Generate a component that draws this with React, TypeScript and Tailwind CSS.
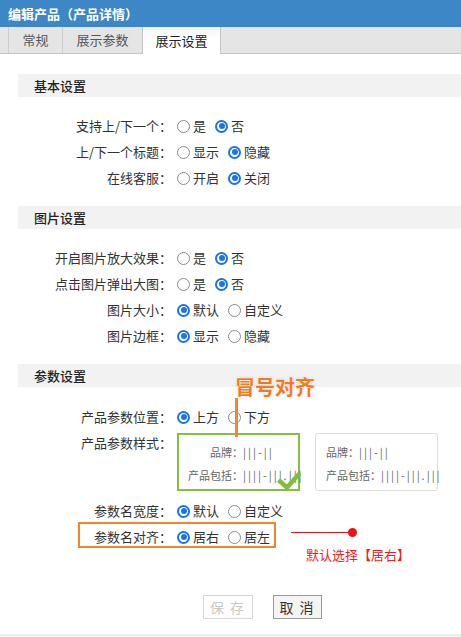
import React from "react";

const FONT = { fontFamily: '"Noto Sans CJK SC", "Noto Sans", sans-serif' };

function Radio({ checked }: { checked?: boolean }) {
  return checked ? (
    <span className="ml-[5px] mr-[3px] flex h-[13px] w-[13px] shrink-0 items-center justify-center rounded-full border-2 border-[#1a74e8] bg-white">
      <span className="h-[6px] w-[6px] rounded-full bg-[#1a74e8]" />
    </span>
  ) : (
    <span className="ml-[5px] mr-[3px] h-[13px] w-[13px] shrink-0 rounded-full border border-[#8a8a8a] bg-white" />
  );
}

function Row({
  label,
  options,
  selected,
}: {
  label: string;
  options: string[];
  selected: number;
}) {
  return (
    <div className="flex h-[26px] items-center text-[13px] text-[#333]">
      <div className="w-[172px] text-right">{label}</div>
      {options.map((opt, i) => (
        <div key={i} className="flex items-center">
          <Radio checked={i === selected} />
          <span className="mr-[4px]">{opt}</span>
        </div>
      ))}
    </div>
  );
}

function SectionBar({ title }: { title: string }) {
  return (
    <div className="ml-[18px] flex h-[23px] items-center bg-[#f2f2f2] pl-[16px] text-[13px] font-medium text-[#222]">
      {title}
    </div>
  );
}

export default function App() {
  return (
    <div
      className="relative h-[637px] w-[461px] overflow-hidden bg-white"
      style={FONT}
    >
      {/* header */}
      <div className="flex h-[27px] items-center bg-[#3d87c7] pl-[8px] text-[13px] font-bold text-white">
        编辑产品（产品详情）
      </div>

      {/* tabs */}
      <div className="flex h-[27px] border-b border-[#c4c4c4] bg-[#e5e5e5] pl-[8px] text-[13px]">
        <div className="flex h-[26px] w-[54px] items-center justify-center border-l border-[#cdcdcd] text-[#555]">
          常规
        </div>
        <div className="flex h-[26px] w-[80px] items-center justify-center border-l border-[#cdcdcd] text-[#555]">
          展示参数
        </div>
        <div className="mb-[-1px] flex h-[27px] w-[79px] items-center justify-center border-x border-[#c4c4c4] bg-gradient-to-b from-[#f4f4f4] to-white to-40% text-[#222]">
          展示设置
        </div>
      </div>

      <div className="mt-[20px]">
        <SectionBar title="基本设置" />
        <div className="mt-[16px]">
          <Row label="支持上/下一个：" options={["是", "否"]} selected={1} />
          <Row label="上/下一个标题：" options={["显示", "隐藏"]} selected={1} />
          <Row label="在线客服：" options={["开启", "关闭"]} selected={1} />
        </div>
      </div>

      <div className="mt-[15px]">
        <SectionBar title="图片设置" />
        <div className="mt-[16px]">
          <Row label="开启图片放大效果：" options={["是", "否"]} selected={1} />
          <Row label="点击图片弹出大图：" options={["是", "否"]} selected={1} />
          <Row label="图片大小：" options={["默认", "自定义"]} selected={0} />
          <Row label="图片边框：" options={["显示", "隐藏"]} selected={0} />
        </div>
      </div>

      <div className="mt-[15px]">
        <SectionBar title="参数设置" />
        <div className="mt-[17px]">
          <Row label="产品参数位置：" options={["上方", "下方"]} selected={0} />
          <div className="flex items-start text-[13px] text-[#333]">
            <div className="flex h-[26px] w-[172px] items-center justify-end">
              产品参数样式：
            </div>
            <div className="ml-[5px] mt-[3px] flex gap-[15px] text-[11px] text-[#666]">
              <div className="relative h-[58px] w-[123px] border-2 border-[#84c141] pl-[9px] pt-[8px]">
                <div className="grid grid-cols-[55px_auto] gap-y-[5px] leading-[18px]">
                  <span className="text-right">品牌：</span>
                  <span className="tracking-[2px]">|||-||</span>
                  <span className="text-right">产品包括：</span>
                  <span className="whitespace-nowrap tracking-[2px]">||||-|||.|||</span>
                </div>
                <svg
                  className="absolute left-[98px] top-[36px]"
                  width="24"
                  height="19"
                  viewBox="0 0 24 19"
                >
                  <path
                    d="M1.5 9 L10 16.5 L23 2"
                    fill="none"
                    stroke="#7fbf3a"
                    strokeWidth="4.5"
                  />
                </svg>
              </div>
              <div className="h-[58px] w-[123px] rounded-[3px] border border-[#dedede] pl-[10px] pt-[9px]">
                <div className="flex flex-col gap-[5px] leading-[18px]">
                  <div className="whitespace-nowrap">
                    品牌：<span className="tracking-[2px]">|||-||</span>
                  </div>
                  <div className="whitespace-nowrap">
                    产品包括：<span className="tracking-[2px]">||||-|||.|||</span>
                  </div>
                </div>
              </div>
            </div>
          </div>
          <div className="mt-[7px]">
            <Row label="参数名宽度：" options={["默认", "自定义"]} selected={0} />
            <Row label="参数名对齐：" options={["居右", "居左"]} selected={0} />
          </div>
        </div>
      </div>

      {/* buttons */}
      <div className="mt-[45px] flex gap-[20px] pl-[203px] text-[14px]">
        <button className="h-[24px] w-[50px] border border-[#d6d6d6] bg-white pl-[4px] tracking-[6px] text-[#c8c8c8]">
          保存
        </button>
        <button className="h-[24px] w-[49px] border border-[#9a9a9a] bg-[#f4f4f4] pl-[4px] tracking-[6px] text-[#333]">
          取消
        </button>
      </div>
      <div className="mt-[15px] h-[3px] bg-[#efefef]" />

      {/* annotations */}
      <div className="absolute left-[235px] top-[377px] text-[20px] font-bold leading-[20px] text-[#f47a1f] [text-shadow:0_0_2px_#fff,0_0_2px_#fff,0_0_3px_rgba(0,0,0,0.25)]">
        冒号对齐
      </div>
      <div className="absolute left-[235px] top-[398px] h-[39px] w-[3px] bg-[#f5842a]" />

      <div className="absolute left-[78px] top-[522px] h-[26px] w-[198px] border-2 border-[#f5842a]" />
      <div className="absolute left-[291px] top-[532px] h-px w-[61px] bg-[#e8141b]" />
      <div className="absolute left-[348px] top-[528px] h-[9px] w-[9px] rounded-full bg-[#e8141b]" />
      <div className="absolute left-[306px] top-[547px] text-[13px] leading-[16px] text-[#ef1c1c]">
        默认选择【居右】
      </div>
    </div>
  );
}
